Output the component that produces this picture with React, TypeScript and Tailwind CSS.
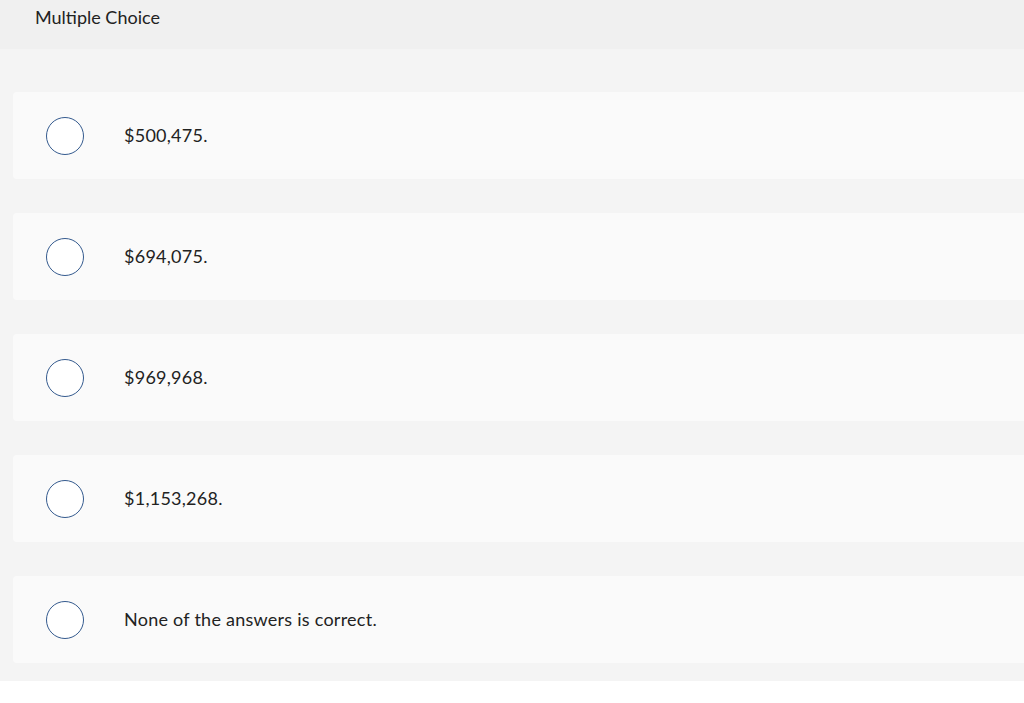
const options = [
  "$500,475.",
  "$694,075.",
  "$969,968.",
  "$1,153,268.",
  "None of the answers is correct.",
];

export default function App() {
  return (
    <div className="w-[1024px] h-[703px] bg-white overflow-hidden" style={{ fontFamily: "Lato, 'Open Sans', sans-serif" }}>
      <div className="h-[49px] bg-[#f0f0f0] pl-[35px] pt-[4px] text-[18px] text-[#222]">Multiple Choice</div>
      <div className="bg-[#f4f4f4] pt-[43px] pb-[18px] pl-[13px] flex flex-col gap-[34px]">
        {options.map((opt) => (
          <label key={opt} className="h-[87px] w-[1030px] bg-[#fafafa] rounded-[4px] flex items-center">
            <span className="ml-[33px] w-[38px] h-[38px] rounded-full border-[1.5px] border-[#345a8e] bg-white shrink-0" />
            <span className="ml-[40px] text-[18px] tracking-[0.25px] text-[#222]">{opt}</span>
          </label>
        ))}
      </div>
    </div>
  );
}
